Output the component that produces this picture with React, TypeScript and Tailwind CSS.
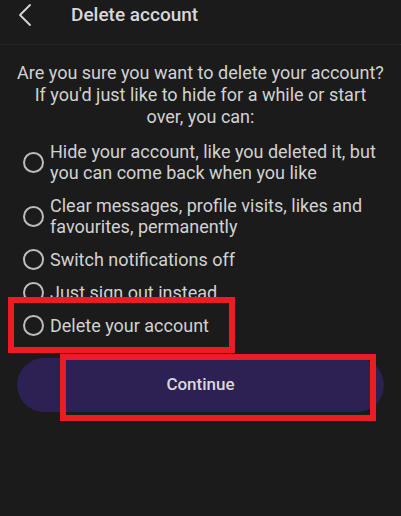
import React from 'react';

const options = [
  ['Hide your account, like you deleted it, but', 'you can come back when you like'],
  ['Clear messages, profile visits, likes and', 'favourites, permanently'],
  ['Switch notifications off'],
  ['Just sign out instead'],
  ['Delete your account'],
];

function Radio() {
  return <div className="w-[21px] h-[21px] shrink-0 rounded-full border-2 border-[#bdbdbd]" />;
}

export default function App() {
  return (
    <div
      className="relative w-[401px] h-[516px] overflow-hidden bg-[#1b1b1b] text-[#d2d2d2]"
      style={{ fontFamily: 'Roboto, "Noto Sans", sans-serif' }}
    >
      {/* header */}
      <div className="flex items-center h-[30px]">
        <svg className="ml-[17px]" width="16" height="24" viewBox="0 0 16 24" fill="none">
          <path d="M13 2 L3 12 L13 22" stroke="#d6d6d6" strokeWidth="1.8" strokeLinecap="round" strokeLinejoin="round" />
        </svg>
        <p className="ml-[38px] text-[19px] font-medium text-[#d8d8d8]">Delete account</p>
      </div>
      <div className="mt-[14px] border-t border-dotted border-[#2e2e2e]" />

      <p className="mt-[17px] text-center text-[18px] leading-[22px]">
        Are you sure you want to delete your account?
        <br />
        If you'd just like to hide for a while or start
        <br />
        over, you can:
      </p>

      <div className="mt-[13px] flex flex-col gap-3 pl-[23px]">
        {options.map((lines, i) => (
          <div key={i} className="flex items-center gap-[6px]">
            <Radio />
            <p className="text-[18px] leading-[21px]">
              {lines.map((l, j) => (
                <React.Fragment key={j}>
                  {j > 0 && <br />}
                  {l}
                </React.Fragment>
              ))}
            </p>
          </div>
        ))}
      </div>

      <div className="px-[17px] mt-[22px]">
        <button className="w-full h-[54px] rounded-full bg-[#2c2152] text-[17px] font-medium text-[#d9d9d9]">
          Continue
        </button>
      </div>

      {/* red annotation boxes */}
      <div className="absolute left-[8px] top-[297px] w-[227px] h-[56px] border-[6px] border-[#ec1c24]" />
      <div className="absolute left-[60px] top-[354px] w-[316px] h-[67px] border-[6px] border-[#ec1c24]" />
    </div>
  );
}
